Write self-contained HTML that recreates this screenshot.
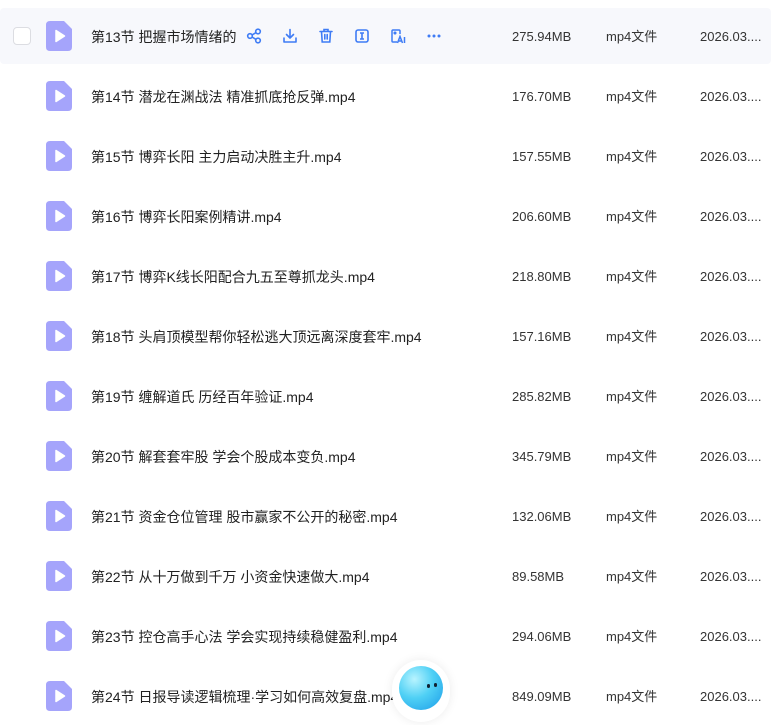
<!DOCTYPE html>
<html><head><meta charset="utf-8"><style>
body{margin:0;width:771px;height:717px;overflow:hidden;background:#fff;font-family:"Liberation Sans","Noto Sans CJK SC",sans-serif;color:#222;position:relative}
.row{position:absolute;left:0;width:771px;height:56px}
.row.h{background:#f7f8fc;border-radius:4px}
.fi{position:absolute;left:46px;top:13px}
.name{position:absolute;left:91px;top:1px;line-height:56px;font-size:14px;white-space:nowrap}
.sz,.ty,.dt{position:absolute;top:1px;line-height:56px;font-size:13px;color:#333}
.sz{left:512px}.ty{left:606px}.dt{left:700px}
.cb{position:absolute;left:13px;top:19px;width:16px;height:16px;border:1px solid #dcdde2;border-radius:4px;background:#fff}
.ic{position:absolute;top:20px}
</style></head><body>
<svg width="0" height="0" style="position:absolute"><defs><g id="f"><path d="M4 0H18L26 8V26Q26 30 22 30H4Q0 30 0 26V4Q0 0 4 0Z" fill="#a5a4fb"/><path d="M10 9.5L18.5 15L10 20.5Z" fill="#fff" stroke="#fff" stroke-width="1.5" stroke-linejoin="round"/></g></defs></svg>

<div class="row h" style="top:8px">
<div class="cb"></div>
<svg class="fi" width="26" height="30"><use href="#f"/></svg>
<div class="name">第13节 把握市场情绪的</div>
<svg class="ic" style="left:246px" width="16" height="16" fill="none" stroke="#3f7cf5" stroke-width="1.6"><circle cx="4" cy="8" r="2.3"/><circle cx="12" cy="3.5" r="2.3"/><circle cx="12" cy="12.5" r="2.3"/><path d="M6 7L10 4.6M6 9L10 11.4"/></svg>
<svg class="ic" style="left:282px" width="16" height="16" fill="none" stroke="#3f7cf5" stroke-width="1.6" stroke-linecap="round" stroke-linejoin="round"><path d="M8 1.5V10M4.5 6.5L8 10L11.5 6.5M2 10V14H14V10"/></svg>
<svg class="ic" style="left:318px" width="16" height="16" fill="none" stroke="#3f7cf5" stroke-width="1.6" stroke-linecap="round"><path d="M2 3.5H14M6 3V1.5H10V3M3.5 3.5L4.2 14H11.8L12.5 3.5M6.8 6.5V11M9.2 6.5V11"/></svg>
<svg class="ic" style="left:354px" width="16" height="16" fill="none" stroke="#3f7cf5" stroke-width="1.6"><rect x="2" y="2" width="12" height="12" rx="2"/><path d="M6 5H10M8 5V11M6 11H10"/></svg>
<svg class="ic" style="left:390px" width="16" height="16" fill="none" stroke="#3f7cf5" stroke-width="1.5"><path d="M7 14H3Q2 14 2 13V3Q2 2 3 2H9Q10 2 10 3V6"/><circle cx="5" cy="5" r="0.8" fill="#3f7cf5"/><path d="M7.5 15L10 8.5L12.5 15M8.4 13H11.6M14.5 9V15"/></svg>
<svg class="ic" style="left:426px" width="16" height="16" fill="#3f7cf5"><circle cx="3" cy="8" r="1.5"/><circle cx="8" cy="8" r="1.5"/><circle cx="13" cy="8" r="1.5"/></svg>
<div class="sz">275.94MB</div><div class="ty">mp4文件</div><div class="dt">2026.03....</div>
</div>

<div class="row" style="top:68px"><svg class="fi" width="26" height="30"><use href="#f"/></svg><div class="name">第14节 潜龙在渊战法 精准抓底抢反弹.mp4</div><div class="sz">176.70MB</div><div class="ty">mp4文件</div><div class="dt">2026.03....</div></div>
<div class="row" style="top:128px"><svg class="fi" width="26" height="30"><use href="#f"/></svg><div class="name">第15节 博弈长阳 主力启动决胜主升.mp4</div><div class="sz">157.55MB</div><div class="ty">mp4文件</div><div class="dt">2026.03....</div></div>
<div class="row" style="top:188px"><svg class="fi" width="26" height="30"><use href="#f"/></svg><div class="name">第16节 博弈长阳案例精讲.mp4</div><div class="sz">206.60MB</div><div class="ty">mp4文件</div><div class="dt">2026.03....</div></div>
<div class="row" style="top:248px"><svg class="fi" width="26" height="30"><use href="#f"/></svg><div class="name">第17节 博弈K线长阳配合九五至尊抓龙头.mp4</div><div class="sz">218.80MB</div><div class="ty">mp4文件</div><div class="dt">2026.03....</div></div>
<div class="row" style="top:308px"><svg class="fi" width="26" height="30"><use href="#f"/></svg><div class="name">第18节 头肩顶模型帮你轻松逃大顶远离深度套牢.mp4</div><div class="sz">157.16MB</div><div class="ty">mp4文件</div><div class="dt">2026.03....</div></div>
<div class="row" style="top:368px"><svg class="fi" width="26" height="30"><use href="#f"/></svg><div class="name">第19节 缠解道氏 历经百年验证.mp4</div><div class="sz">285.82MB</div><div class="ty">mp4文件</div><div class="dt">2026.03....</div></div>
<div class="row" style="top:428px"><svg class="fi" width="26" height="30"><use href="#f"/></svg><div class="name">第20节 解套套牢股 学会个股成本变负.mp4</div><div class="sz">345.79MB</div><div class="ty">mp4文件</div><div class="dt">2026.03....</div></div>
<div class="row" style="top:488px"><svg class="fi" width="26" height="30"><use href="#f"/></svg><div class="name">第21节 资金仓位管理 股市赢家不公开的秘密.mp4</div><div class="sz">132.06MB</div><div class="ty">mp4文件</div><div class="dt">2026.03....</div></div>
<div class="row" style="top:548px"><svg class="fi" width="26" height="30"><use href="#f"/></svg><div class="name">第22节 从十万做到千万 小资金快速做大.mp4</div><div class="sz">89.58MB</div><div class="ty">mp4文件</div><div class="dt">2026.03....</div></div>
<div class="row" style="top:608px"><svg class="fi" width="26" height="30"><use href="#f"/></svg><div class="name">第23节 控仓高手心法 学会实现持续稳健盈利.mp4</div><div class="sz">294.06MB</div><div class="ty">mp4文件</div><div class="dt">2026.03....</div></div>
<div class="row" style="top:668px"><svg class="fi" width="26" height="30"><use href="#f"/></svg><div class="name">第24节 日报导读逻辑梳理·学习如何高效复盘.mp4</div><div class="sz">849.09MB</div><div class="ty">mp4文件</div><div class="dt">2026.03....</div></div>

<div style="position:absolute;left:392px;top:660px;width:58px;height:62px;border-radius:29px;background:#fff;box-shadow:0 0 10px rgba(0,0,0,0.08)"></div>
<div style="position:absolute;left:399px;top:666px;width:44px;height:44px;border-radius:50%;background:radial-gradient(circle at 35% 30%,#b8f4ff 0%,#4fd0f5 45%,#1a9be8 100%)"></div>
<div style="position:absolute;left:427px;top:684px;width:3px;height:4px;border-radius:2px;background:#123"></div>
<div style="position:absolute;left:434px;top:683px;width:3px;height:4px;border-radius:2px;background:#123"></div>
</body></html>
